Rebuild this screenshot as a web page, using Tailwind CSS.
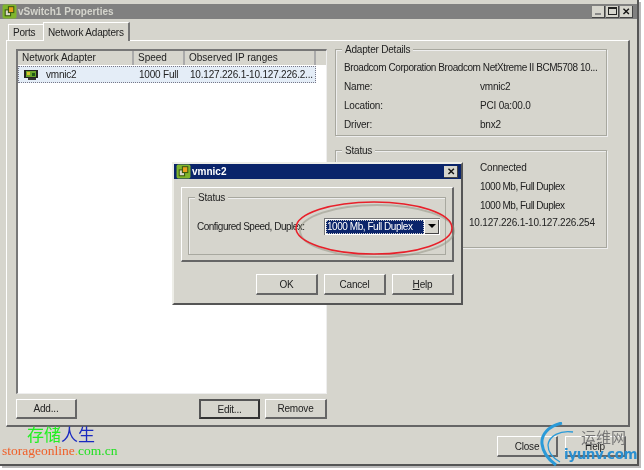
<!DOCTYPE html>
<html lang="en">
  <head>
    <meta charset="UTF-8" />
    <title>vSwitch1 Properties</title>
    <script src="https://cdn.jsdelivr.net/npm/@tailwindcss/browser@4"></script>
  </head>
  <body class="bg-white">
    <div class="relative w-[644px] h-[470px] overflow-hidden bg-white font-['Liberation_Sans',Arial,sans-serif] text-[10px] tracking-[-0.2px] leading-[13px] text-[#222] blur-[0.4px]">
      <!-- Main window -->
      <div class="w-[639px] h-[466px] bg-[#d6d5cd] border-r-2 border-b-2 border-[#555] pt-[4px] shadow-[2px_2px_0_#bbb]">
        <div class="h-[15px] bg-[#808080] flex items-center pl-[2px] pr-[4px] gap-[1px]">
          <svg width="15" height="15" viewBox="0 0 14 14">
            <rect x="0.5" y="0.5" width="13" height="13" rx="1.5" fill="#7fb52c" />
            <rect x="3" y="5.5" width="5" height="5.5" fill="#d9d9c8" stroke="#3b5a10" />
            <rect x="6" y="2.5" width="5" height="5.5" fill="#e9a11f" stroke="#3b5a10" />
          </svg>
          <span class="font-bold text-[10px] tracking-normal text-[#d4d4cc]">vSwitch1 Properties</span>
          <div class="ml-auto flex gap-[1px]">
            <div class="w-[13px] h-[12px] bg-[#d6d5cd] border-r border-b border-[#444] flex items-end pl-[3px] pb-[2px]"><div class="w-[6px] h-[2px] bg-[#888]"></div></div>
            <div class="w-[13px] h-[12px] bg-[#d6d5cd] border-r border-b border-[#444] flex items-center justify-center"><div class="w-[9px] h-[8px] border border-t-2 border-[#222]"></div></div>
            <div class="w-[13px] h-[12px] bg-[#d6d5cd] border-r border-b border-[#444] flex items-center justify-center font-bold text-[#111]">✕</div>
          </div>
        </div>
        <!-- Tabs -->
        <div class="flex items-end h-[21px] pl-[8px]">
          <div class="w-[35px] h-[16px] border-t border-l border-white flex items-center pl-[4px]">Ports</div>
          <div class="w-[87px] h-[19px] -mb-[1px] z-10 bg-[#d6d5cd] border-t border-l border-white border-r-2 border-r-[#777] flex items-center pl-[4px] whitespace-nowrap">Network Adapters</div>
        </div>
        <!-- Tab panel -->
        <div class="ml-[6px] w-[624px] h-[387px] border-t border-l border-white border-r-2 border-b-2 border-r-[#666] border-b-[#666] pl-[9px] pt-[8px] flex">
          <div class="w-[311px] flex flex-col">
            <div class="h-[345px] bg-white border-t-2 border-l-2 border-[#777] border-r border-b border-r-[#eee] border-b-[#eee]">
              <div class="flex h-[14px] bg-[#d6d5cd] leading-[14px] tracking-normal whitespace-nowrap">
                <div class="w-[116px] pl-[4px] border-r-2 border-[#aaa]">Network Adapter</div>
                <div class="w-[51px] pl-[4px] border-r-2 border-[#aaa]">Speed</div>
                <div class="w-[131px] pl-[4px] border-r-2 border-[#aaa]">Observed IP ranges</div>
                <div class="flex-1"></div>
              </div>
              <div class="mt-[1px] flex items-center w-[298px] h-[17px] bg-[#e4edf7] border border-dotted border-[#778] whitespace-nowrap">
                <div class="w-[116px] flex items-center pl-[5px] gap-[8px]">
                  <svg width="14" height="12" viewBox="0 0 14 12">
                    <rect x="0" y="1" width="14" height="8" fill="#222" />
                    <rect x="2" y="2" width="10" height="6" fill="#6aa52a" />
                    <rect x="3" y="3" width="3" height="3" fill="#d8c22c" />
                    <rect x="8" y="4" width="3" height="3" fill="#1d5a16" />
                    <rect x="4" y="9" width="8" height="2" fill="#333" />
                  </svg>
                  <span>vmnic2</span>
                </div>
                <div class="w-[51px] pl-[4px]">1000 Full</div>
                <div class="pl-[4px]">10.127.226.1-10.127.226.2...</div>
              </div>
            </div>
            <div class="mt-[5px] flex justify-between h-[20px]">
              <button class="w-[61px] h-[20px] bg-[#d6d5cd] border-t border-l border-white border-r-2 border-b-2 border-r-[#666] border-b-[#666]">Add...</button>
              <div class="flex gap-[5px]">
                <button class="w-[61px] h-[20px] bg-[#d6d5cd] border-2 border-[#333] border-t-[#555] border-l-[#555]">Edit...</button>
                <button class="w-[62px] h-[20px] bg-[#d6d5cd] border-t border-l border-white border-r-2 border-b-2 border-r-[#666] border-b-[#666]">Remove</button>
              </div>
            </div>
          </div>
          <div class="ml-[8px] w-[272px]">
            <div class="relative h-[87px] border border-[#a8a89f] shadow-[inset_1px_1px_0_#eee,1px_1px_0_#eee] pl-[8px] pt-[11px]">
              <span class="absolute -top-[7px] left-[6px] px-[3px] bg-[#d6d5cd]">Adapter Details</span>
              <div class="whitespace-nowrap tracking-[-0.43px]">Broadcom Corporation Broadcom NetXtreme II BCM5708 10...</div>
              <div class="flex mt-[6px]"><span class="w-[136px]">Name:</span><span>vmnic2</span></div>
              <div class="flex mt-[6px]"><span class="w-[136px]">Location:</span><span>PCI 0a:00.0</span></div>
              <div class="flex mt-[6px]"><span class="w-[136px]">Driver:</span><span>bnx2</span></div>
            </div>
            <div class="relative mt-[14px] h-[98px] border border-[#a8a89f] shadow-[inset_1px_1px_0_#eee,1px_1px_0_#eee] pt-[10px]">
              <span class="absolute -top-[7px] left-[6px] px-[3px] bg-[#d6d5cd]">Status</span>
              <div class="pl-[144px]">Connected</div>
              <div class="pl-[144px] mt-[6px] tracking-[-0.5px]">1000 Mb, Full Duplex</div>
              <div class="pl-[144px] mt-[6px] tracking-[-0.5px]">1000 Mb, Full Duplex</div>
              <div class="pl-[133px] mt-[4px] whitespace-nowrap">10.127.226.1-10.127.226.254</div>
            </div>
          </div>
        </div>
        <!-- Footer buttons -->
        <div class="flex justify-end gap-[7px] pr-[11px] pt-[9px]">
          <button class="w-[61px] h-[21px] bg-[#d6d5cd] border-t border-l border-white border-r-2 border-b-2 border-r-[#666] border-b-[#666]">Close</button>
          <button class="w-[61px] h-[21px] bg-[#d6d5cd] border-t border-l border-white border-r-2 border-b-2 border-r-[#666] border-b-[#666]">Help</button>
        </div>
      </div>

      <!-- vmnic2 dialog -->
      <div class="absolute left-[172px] top-[162px] w-[291px] h-[143px] bg-[#d6d5cd] border-t-2 border-l-2 border-[#eeeee8] border-r-2 border-b-2 border-r-[#555] border-b-[#555]">
        <div class="h-[15px] bg-[#0a246a] flex items-center pl-[2px] pr-[3px] gap-[1px]">
          <svg width="15" height="15" viewBox="0 0 14 14">
            <rect x="0.5" y="0.5" width="13" height="13" rx="1.5" fill="#7fb52c" />
            <rect x="3" y="5.5" width="5" height="5.5" fill="#d9d9c8" stroke="#3b5a10" />
            <rect x="6" y="2.5" width="5" height="5.5" fill="#e9a11f" stroke="#3b5a10" />
          </svg>
          <span class="font-bold tracking-normal text-white">vmnic2</span>
          <div class="ml-auto w-[14px] h-[12px] bg-[#d6d5cd] border-r border-b border-[#444] flex items-center justify-center font-bold text-[#111]">✕</div>
        </div>
        <div class="mx-[7px] mt-[8px] h-[75px] border-t border-l border-white border-r-2 border-b-2 border-r-[#666] border-b-[#666] px-[6px] pt-[9px]">
          <div class="relative h-[58px] border border-[#a8a89f] shadow-[inset_1px_1px_0_#eee] pl-[8px] flex items-center">
            <span class="absolute -top-[7px] left-[6px] px-[3px] bg-[#d6d5cd]">Status</span>
            <span class="w-[127px] whitespace-nowrap tracking-[-0.5px]">Configured Speed, Duplex:</span>
            <div class="flex items-center w-[116px] h-[17px] bg-white border-t border-l border-[#777] pl-[1px] pr-[1px]">
              <div class="w-[98px] h-[14px] bg-[#0a246a] text-white border border-dotted border-[#ccc] leading-[12px] tracking-[-0.45px] whitespace-nowrap">1000 Mb, Full Duplex</div>
              <div class="ml-auto w-[14px] h-[14px] bg-[#d6d5cd] border-r border-b border-[#444] flex items-center justify-center">
                <div class="w-0 h-0 border-l-[4px] border-r-[4px] border-t-[4px] border-l-transparent border-r-transparent border-t-black"></div>
              </div>
            </div>
          </div>
        </div>
        <div class="flex justify-end gap-[6px] pr-[7px] pt-[12px]">
          <button class="w-[62px] h-[21px] bg-[#d6d5cd] border-t border-l border-white border-r-2 border-b-2 border-r-[#666] border-b-[#666]">OK</button>
          <button class="w-[62px] h-[21px] bg-[#d6d5cd] border-t border-l border-white border-r-2 border-b-2 border-r-[#666] border-b-[#666]">Cancel</button>
          <button class="w-[62px] h-[21px] bg-[#d6d5cd] border-t border-l border-white border-r-2 border-b-2 border-r-[#666] border-b-[#666]"><span class="underline">H</span>elp</button>
        </div>
      </div>

      <!-- Red highlight ellipse -->
      <svg class="absolute left-[285px] top-[190px]" width="180" height="75" viewBox="0 0 180 75" fill="none">
        <ellipse cx="92" cy="41" rx="77" ry="26" stroke="#8f8f80" stroke-width="2" opacity="0.5" />
        <ellipse cx="89" cy="38" rx="78" ry="26" stroke="#e8202a" stroke-width="1.6" />
      </svg>

      <!-- Watermarks -->
      <div class="absolute left-[27px] top-[425px] text-[17px] tracking-normal leading-[18px] font-['Noto_Sans_CJK_SC',sans-serif] whitespace-nowrap"><span class="text-[#22f022]">存储</span><span class="text-[#1a2ac0]">人生</span></div>
      <div class="absolute left-[2px] top-[444px] text-[13.5px] tracking-normal leading-[14px] font-['Liberation_Serif',serif] whitespace-nowrap"><span class="text-[#f0602a]">storageonline</span><span class="text-[#f0c020]">.</span><span class="text-[#22e022]">com.cn</span></div>
      <svg class="absolute left-[538px] top-[422px]" width="40" height="46" viewBox="0 0 40 46" fill="none">
        <path d="M24 1C10 4 3 13 4 22C5 31 11 38 18 43" stroke="#2a9ad8" stroke-width="3" />
        <path d="M35 10C22 8 11 14 10 23C10 30 15 36 22 40" stroke="#2a9ad8" stroke-width="1.3" />
      </svg>
      <div class="absolute left-[581px] top-[429px] text-[15px] tracking-normal leading-[16px] text-[#777] font-['Noto_Sans_CJK_SC',sans-serif] whitespace-nowrap">运维网</div>
      <div class="absolute left-[564px] top-[446px] text-[13.5px] leading-[16px] font-bold text-[#2a8fd0] font-['DejaVu_Sans',sans-serif] tracking-[-0.4px] whitespace-nowrap">iyunv.com</div>
    </div>
  </body>
</html>
